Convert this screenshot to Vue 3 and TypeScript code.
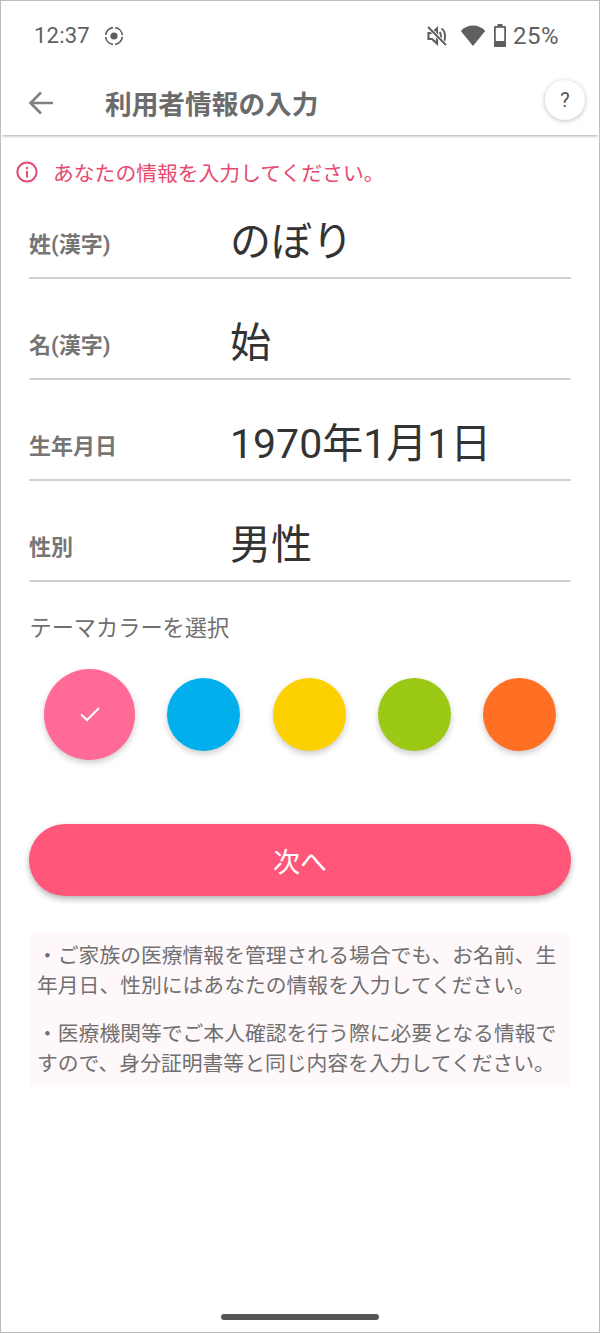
<script setup lang="ts">
const fields = [
  { label: '姓(漢字)', value: 'のぼり' },
  { label: '名(漢字)', value: '始' },
  { label: '生年月日', value: '1970年1月1日' },
  { label: '性別', value: '男性' },
];
const colors = ['#ff6b96', '#00afec', '#fdd000', '#9bc915', '#ff6f24'];
</script>

<template>
  <div class="screen">
    <div class="status">
      <span class="time">12:37</span>
      <svg class="rec" width="20" height="20" viewBox="0 0 20 20">
        <circle cx="10" cy="10" r="3.6" fill="#5f5f5f" />
        <circle cx="10" cy="10" r="8.4" fill="none" stroke="#5f5f5f" stroke-width="1.7" stroke-dasharray="11 2.2" stroke-dashoffset="-1" />
      </svg>
      <span class="grow"></span>
      <svg width="22" height="22" viewBox="0 0 22 22" fill="none" stroke="#5f5f5f">
        <path d="M2.500 8v6h3.500l5 4.500V3.500L6 8z" stroke-width="2.200" />
        <path d="M13.500 7c1.800 1.500 1.800 6 .5 8M15.500 3.500c4.500 3 4.500 11 1.500 15" stroke-width="2" />
        <path d="M2 2l18 18" stroke="#fff" stroke-width="3.600" />
        <path d="M2 2l18 18" stroke-width="2" />
      </svg>
      <svg class="wifi" width="26" height="21" viewBox="0 0 26 21">
        <path d="M13 21L.8 6C4 2.600 8.300.6 13 .6s9 2 12.200 5.400z" fill="#5f5f5f" />
      </svg>
      <svg class="batt" width="14" height="23" viewBox="0 0 14 23">
        <path d="M4.500 0h5v2H12a1 1 0 0 1 1 1v19a1 1 0 0 1-1 1H2a1 1 0 0 1-1-1V3a1 1 0 0 1 1-1h2.500z" fill="#5f5f5f" />
        <rect x="2.800" y="3.800" width="8.400" height="13.200" fill="#fff" />
      </svg>
      <span class="pct">25%</span>
    </div>

    <header class="bar">
      <svg class="back" width="26" height="26" viewBox="0 0 26 26" fill="none" stroke="#808080" stroke-width="2.600">
        <path d="M25 13H3M13 2.500L2.500 13 13 23.500" />
      </svg>
      <h1 class="title">利用者情報の入力</h1>
      <button class="help">?</button>
    </header>

    <div class="notice">
      <svg width="22" height="22" viewBox="0 0 22 22">
        <circle cx="11" cy="11" r="9.600" fill="none" stroke="#e8496e" stroke-width="2" />
        <rect x="10" y="10" width="2" height="6.500" fill="#e8496e" />
        <rect x="10" y="6" width="2" height="2.200" fill="#e8496e" />
      </svg>
      <span>あなたの情報を入力してください。</span>
    </div>

    <div class="form">
      <div v-for="f in fields" :key="f.label" class="row">
        <span class="label">{{ f.label }}</span>
        <span class="value">{{ f.value }}</span>
      </div>
    </div>

    <p class="theme">テーマカラーを選択</p>
    <div class="swatches">
      <div
        v-for="(c, i) in colors"
        :key="c"
        class="swatch"
        :class="{ active: i === 0 }"
        :style="{ background: c }"
      >
        <svg v-if="i === 0" width="22" height="18" viewBox="0 0 22 18" fill="none" stroke="#fff" stroke-width="2">
          <path d="M2 9.500L8 15 20 3" />
        </svg>
      </div>
    </div>

    <button class="next">次へ</button>

    <div class="info">
      <p>・ご家族の医療情報を管理される場合でも、お名前、生年月日、性別にはあなたの情報を入力してください。</p>
      <p>・医療機関等でご本人確認を行う際に必要となる情報ですので、身分証明書等と同じ内容を入力してください。</p>
    </div>

    <div class="grow"></div>
    <div class="home"></div>
  </div>
</template>

<style>
html, body {
  margin: 0;
  background: #fff;
}
</style>

<style scoped>
.screen {
  width: 600px;
  height: 1333px;
  box-sizing: border-box;
  border: 1px solid #bdbdbd;
  display: flex;
  flex-direction: column;
  background: #fff;
  font-family: Roboto, "Noto Sans CJK JP", sans-serif;
  overflow: hidden;
}
.grow {
  flex: 1;
}
.status {
  height: 69px;
  flex: none;
  display: flex;
  align-items: center;
  padding: 0 40px 0 33px;
  color: #5f5f5f;
}
.time {
  font-size: 22px;
  letter-spacing: 0.2px;
}
.rec {
  margin-left: 14px;
}
.wifi {
  margin-left: 12px;
}
.batt {
  margin-left: 7px;
}
.pct {
  font-size: 24px;
  margin-left: 6px;
  letter-spacing: 0.5px;
}
.bar {
  height: 65px;
  flex: none;
  display: flex;
  align-items: center;
  padding: 0 14px 0 27px;
  box-shadow: 0 2px 3px -1px rgba(0, 0, 0, 0.35);
  z-index: 1;
  position: relative;
}
.back {
  flex: none;
}
.title {
  flex: 1;
  margin: 0 0 0 51px;
  font-size: 26.700px;
  font-weight: 700;
  color: #6b6b6b;
}
.help {
  width: 40px;
  height: 40px;
  border: 0;
  border-radius: 50%;
  padding: 0;
  background: #fff;
  color: #555;
  font-family: inherit;
  font-size: 20px;
  box-shadow: 0 1px 5px rgba(0, 0, 0, 0.25);
  margin-top: -6px;
}
.notice {
  display: flex;
  align-items: center;
  gap: 15px;
  height: 30px;
  margin-top: 22px;
  padding-left: 15px;
  color: #e8496e;
  font-size: 20.800px;
}
.form {
  padding: 0 28px;
  margin-top: 1px;
}
.row {
  height: 101px;
  box-sizing: border-box;
  padding-top: 29px;
  border-bottom: 2px solid #d2d2d2;
  display: flex;
  align-items: center;
}
.row:first-child {
  height: 91px;
  padding-top: 19px;
}
.label {
  width: 201px;
  flex: none;
  font-size: 22px;
  font-weight: 700;
  color: #757575;
}
.value {
  font-size: 41px;
  color: #333;
  line-height: 1;
}
.theme {
  margin: 31px 0 0 28.500px;
  font-size: 22.200px;
  color: #707070;
  line-height: 30px;
}
.swatches {
  display: flex;
  justify-content: space-between;
  align-items: center;
  height: 92px;
  padding: 0 43px;
  margin-top: 25px;
}
.swatch {
  width: 73px;
  height: 73px;
  border-radius: 50%;
  display: flex;
  align-items: center;
  justify-content: center;
  box-shadow: 0 3px 6px rgba(0, 0, 0, 0.2);
}
.swatch.active {
  width: 91px;
  height: 91px;
}
.next {
  display: block;
  flex: none;
  margin: 64px 28px 0;
  height: 72px;
  border: 0;
  border-radius: 36px;
  background: #ff5679;
  color: #fff;
  font-family: inherit;
  font-size: 27px;
  box-shadow: 0 3px 6px rgba(0, 0, 0, 0.3);
}
.info {
  margin: 37px 28px 0;
  padding: 8px 8px;
  background: #fff8fa;
  border-radius: 4px;
  font-size: 20.800px;
  line-height: 30px;
  color: #707070;
}
.info p {
  margin: 0;
}
.info p + p {
  margin-top: 18px;
}
.home {
  flex: none;
  width: 158px;
  height: 6px;
  border-radius: 3px;
  background: #555;
  margin: 0 auto 12px;
}
</style>
